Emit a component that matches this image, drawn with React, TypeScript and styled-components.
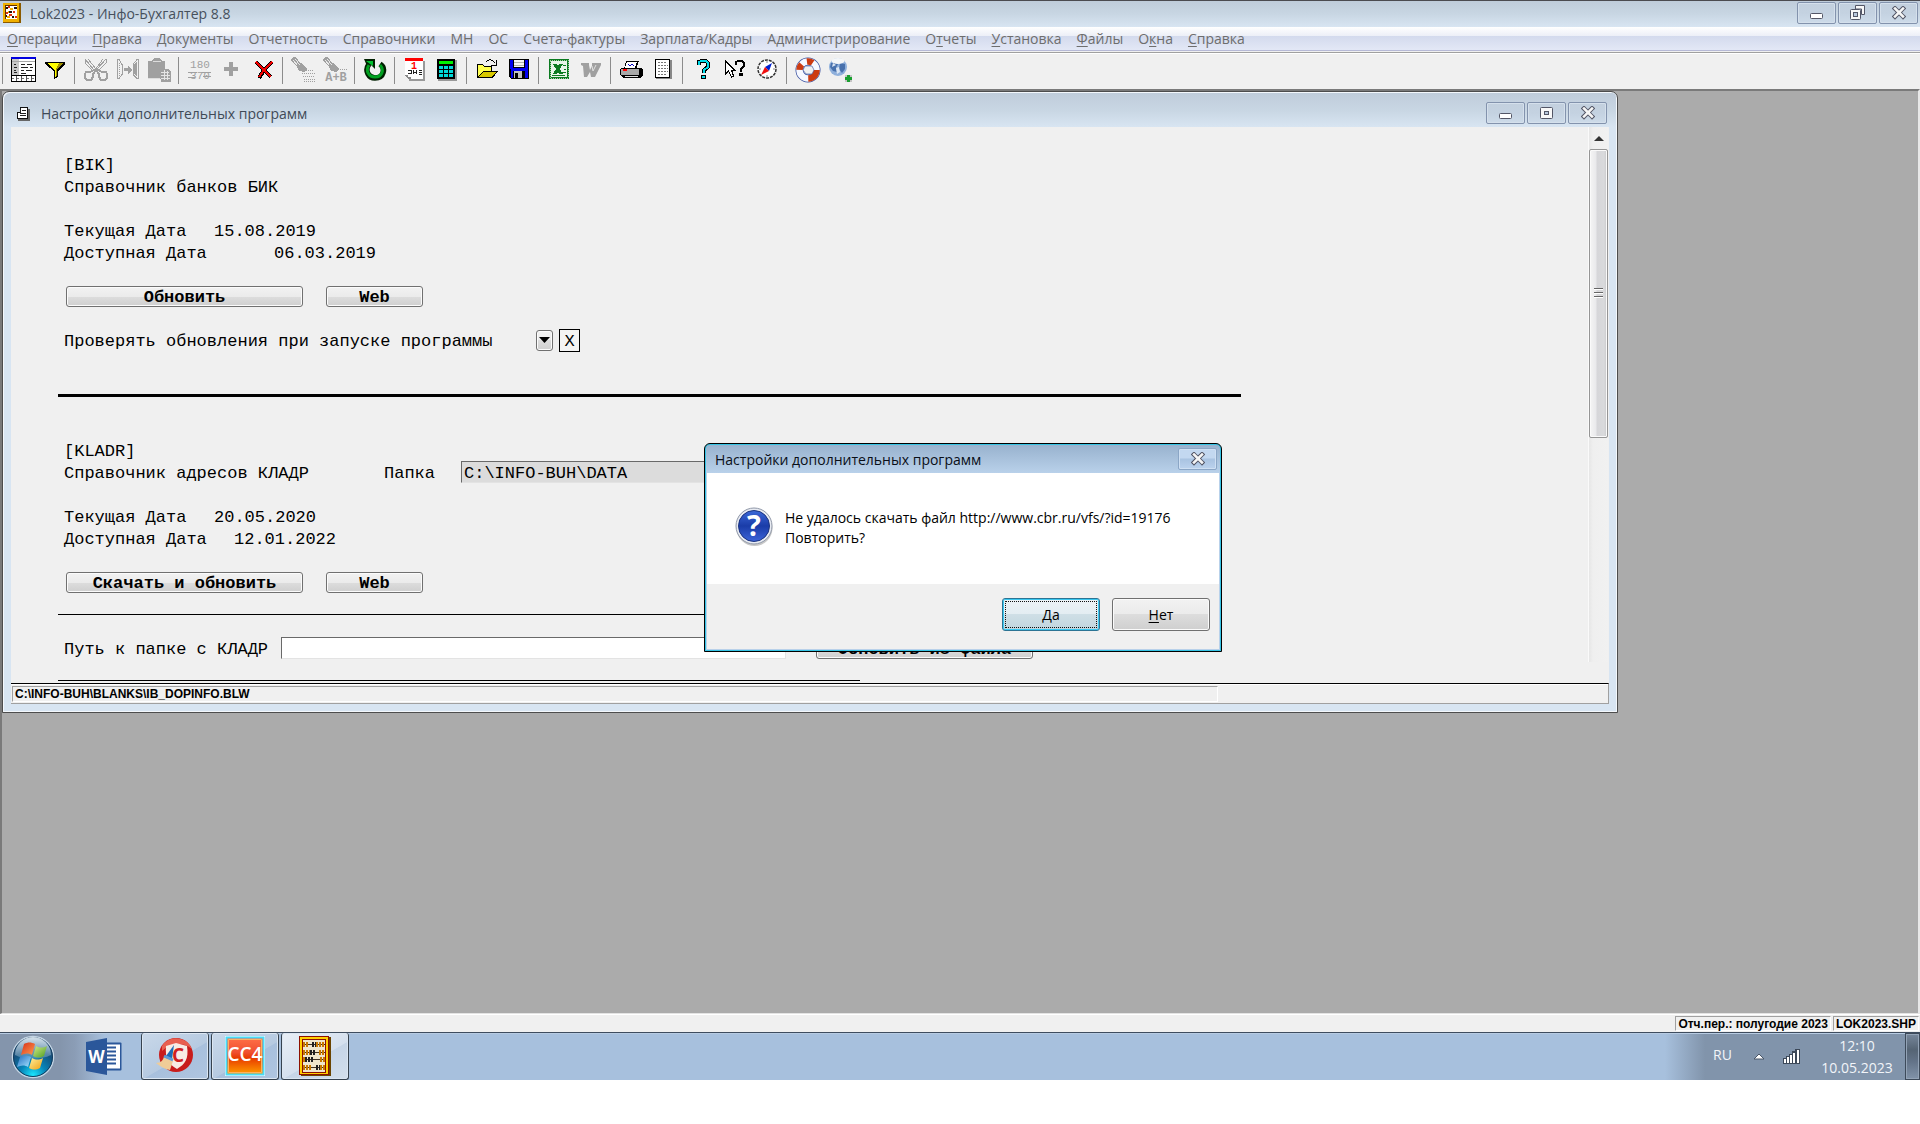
import React from "react";
import styled, { createGlobalStyle, css } from "styled-components";

const UI = `"Open Sans", "Noto Sans", sans-serif`;
const MONO = `"Liberation Mono", monospace`;

const GlobalStyle = createGlobalStyle`
  * { box-sizing: border-box; }
  body { margin: 0; background: #fff; font-family: ${UI}; font-size: 14px; }
  button, input { font: inherit; color: inherit; margin: 0; border-radius: 0; }
`;

/* ---------- application frame ---------- */

const Screen = styled.div`
  display: flex;
  flex-direction: column;
  min-height: calc(100vh - 44px);
`;

const TitleBar = styled.header`
  display: flex;
  align-items: flex-start;
  justify-content: space-between;
  height: 27px;
  padding: 1px 2px 0 3px;
  border-top: 1px solid #4b4b50;
  background: linear-gradient(#bfccda, #c8d6e3 50%, #d8e5f2);
`;

const TitleText = styled.h1`
  display: flex;
  align-items: center;
  gap: 9px;
  height: 22px;
  margin: 0;
  font-size: 14px;
  font-weight: 400;
  color: #46505c;
`;

const WindowControls = styled.div`
  display: flex;
  gap: 2px;
`;

const ControlButton = styled.button<{ $light?: boolean }>`
  display: flex;
  align-items: center;
  justify-content: center;
  width: 39px;
  height: 22px;
  padding: 0;
  border: 1px solid ${(p) => (p.$light ? "#8ba6c6" : "#8393ad")};
  border-radius: 2px;
  box-shadow: inset 0 0 0 1px ${(p) => (p.$light ? "#cfe0f3" : "#d5e0ec")};
  background: ${(p) =>
    p.$light
      ? "linear-gradient(#c3d8f0 0 45%, #a9c3e1 50%, #bcd3ee)"
      : "linear-gradient(#c3d0de, #c4d2e1 50%, #cddbe9)"};
`;

const MenuBar = styled.nav`
  display: flex;
  align-items: center;
  gap: 15px;
  height: 26px;
  padding: 0 7px 2px;
  background: linear-gradient(#fff 0, #eceff7 9px, #d3daed 9px, #e3e8f6 23px, #b6b9d6 23px, #b6b9d6 24px, #f0f0f0 24px, #f0f0f0 25px, #a0a0a0 25px);
`;

const MenuItem = styled.button`
  padding: 0;
  border: 0;
  background: none;
  line-height: 24px;
  color: #6d6d6d;
  white-space: nowrap;
  u { text-underline-offset: 2px; }
`;

const ToolBar = styled.div`
  display: flex;
  align-items: center;
  height: 36px;
  padding-bottom: 3px;
  border-top: 1px solid #fff;
  background: #f0f0f0;
`;

const Separator = styled.span`
  flex: none;
  width: 8px;
  height: 27px;
  padding-left: 2px;
  &::before {
    content: "";
    display: block;
    width: 1px;
    height: 100%;
    background: #8c8c8c;
  }
`;

const ToolButton = styled.button`
  display: flex;
  align-items: center;
  justify-content: center;
  width: 32px;
  height: 32px;
  padding: 0;
  border: 0;
  background: none;
  svg { display: block; }
`;

const Desktop = styled.main`
  position: relative;
  flex: 1;
  min-height: 640px;
  border-style: solid;
  border-width: 2px 2px 1px 2px;
  border-color: #7a7a7a #e8e8e8 #e3e3e3 #7a7a7a;
  background: #ababab;
`;

const StatusBar = styled.footer`
  display: flex;
  justify-content: flex-end;
  gap: 2px;
  height: 18px;
  padding: 1px 1px 1px 0;
  border-top: 1px solid #fff;
  background: #f0f0f0;
`;

const StatusCell = styled.span`
  padding: 0 2px;
  border: 1px solid;
  border-color: #a0a0a0 #fff #fff #a0a0a0;
  font: 700 12px/14px "Liberation Sans", sans-serif;
  white-space: nowrap;
  color: #000;
`;

/* ---------- child window ---------- */

const ChildWindow = styled.section`
  width: 1616px;
  max-width: 100%;
  padding: 0 8px 8px;
  border: 1px solid #4d4d4d;
  border-radius: 7px 7px 0 0;
  box-shadow: inset 1px 1px 0 #f4f8fc, inset -1px -1px 0 #f4f8fc;
  background: linear-gradient(#bfccda, #c8d6e3 18px, #d8e5f2 35px);
`;

const ChildTitle = styled.header`
  display: flex;
  align-items: flex-start;
  justify-content: space-between;
  height: 35px;
  padding: 10px 2px 0 5px;
`;

const ChildCaption = styled.h2`
  display: flex;
  align-items: center;
  gap: 11px;
  height: 23px;
  margin: 0;
  font-size: 14px;
  font-weight: 400;
  color: #3f4a57;
`;

const ChildBody = styled.div`
  display: flex;
  justify-content: space-between;
  height: 556px;
  padding-right: 1px;
  overflow: hidden;
  background: #f0f0f0;
`;

const Form = styled.form`
  display: flex;
  flex-direction: column;
  flex: 1;
  padding: 26px 0 0 53px;
  font-family: ${MONO};
  font-size: 17px;
  line-height: 18px;
  color: #000;
`;

const Row = styled.div`
  display: flex;
  align-items: center;
  flex: none;
  height: 22px;
  white-space: pre;
`;

const Gap = styled.div<{ $rows?: number }>`
  flex: none;
  height: ${(p) => (p.$rows ?? 1) * 22}px;
`;

const Cell = styled.span<{ $w?: number }>`
  flex: none;
  width: ${(p) => (p.$w ? `${p.$w}px` : "auto")};
  padding-top: 4px;
`;

const FieldLabel = styled.label<{ $w: number }>`
  flex: none;
  width: ${(p) => p.$w}px;
  padding-top: 4px;
`;

const Rule = styled.hr<{ $w: number; $thick?: boolean }>`
  flex: none;
  width: ${(p) => p.$w}px;
  height: ${(p) => (p.$thick ? 3 : 1)}px;
  margin: -1px 0 ${(p) => (p.$thick ? -2 : 0)}px -6px;
  border: 0;
  background: #000;
`;

const raised = css`
  border: 1px solid #707070;
  border-radius: 3px;
  box-shadow: inset 0 0 0 1px #fbfbfb;
  background: linear-gradient(#f2f2f2, #ebebeb 50%, #dddddd 50%, #cfcfcf);
`;

const ButtonRow = styled(Row)`
  gap: 23px;
  padding-left: 2px;
`;

const FormButton = styled.button<{ $w: number }>`
  ${raised}
  width: ${(p) => p.$w}px;
  height: 21px;
  padding: 3px 0 0;
  font-weight: 700;
  line-height: 16px;
`;

const DropButton = styled.button`
  ${raised}
  display: flex;
  align-items: center;
  justify-content: center;
  width: 17px;
  height: 21px;
  margin-right: 6px;
  padding: 0;
`;

const FlagInput = styled.input`
  width: 21px;
  height: 23px;
  padding: 2px 0 0;
  border: 1px solid #000;
  background: #f4f4f4;
  text-align: center;
`;

const PathInput = styled.input<{ $off?: boolean }>`
  width: 505px;
  height: 22px;
  padding: 2px 0 0 2px;
  border: 1px solid;
  border-color: #696969 #e3e3e3 #e3e3e3 #696969;
  outline: 0;
  background: ${(p) => (p.$off ? "#dcdcdc" : "#fff")};
`;

const ScrollTrack = styled.div`
  display: flex;
  flex-direction: column;
  align-items: center;
  width: 20px;
  height: 535px;
  border-left: 1px solid #fafafa;
  background: linear-gradient(90deg, #e6e6e6, #efefef 4px, #f1f1f1);
`;

const ScrollArrow = styled.div`
  display: flex;
  align-items: center;
  height: 22px;
`;

const ScrollThumb = styled.div`
  display: flex;
  align-items: center;
  justify-content: center;
  width: 19px;
  height: 289px;
  border: 1px solid #959595;
  border-radius: 2px;
  box-shadow: inset 0 0 0 1px #fafafa;
  background: linear-gradient(90deg, #f5f5f5, #e9e9eb 6px, #d6d6d9 7px, #d9dadc 14px, #c8c8ca);
`;

const ChildStatus = styled.div`
  display: flex;
  height: 21px;
  padding: 2px 0 1px;
  border-top: 1px solid #000;
  border-right: 1px solid #a0a0a0;
  border-bottom: 1px solid #a0a0a0;
  box-shadow: inset 0 1px 0 #fff;
  background: #f0f0f0;
`;

const ChildStatusCell = styled(StatusCell)`
  flex: 0 1 1206px;
  margin-left: 1px;
`;

/* ---------- message box ---------- */

const Dialog = styled.div`
  position: absolute;
  top: 352px;
  left: 702px;
  width: 518px;
  border: 1px solid #000;
  border-radius: 6px 6px 0 0;
  padding: 1px;
  background: #35c3e4;
  overflow: hidden;
`;

const DialogFrame = styled.div`
  padding: 0 1px 1px;
  border-radius: 4px 4px 0 0;
  overflow: hidden;
  background: linear-gradient(#98b2ce, #b9d1ea 28px);
`;

const DialogTitle = styled.header`
  display: flex;
  align-items: flex-start;
  justify-content: space-between;
  height: 28px;
  padding: 3px 2px 0 8px;
`;

const DialogCaption = styled.h2`
  margin: 0;
  font-size: 14px;
  font-weight: 400;
  line-height: 23px;
  color: #0a0f18;
`;

const DialogBody = styled.div`
  display: flex;
  gap: 12px;
  padding: 34px 28px 36px 28px;
  background: #fff;
  svg { flex: none; }
`;

const DialogText = styled.p`
  margin: 0;
  padding-top: 1px;
  line-height: 20px;
  color: #000;
  white-space: nowrap;
`;

const DialogFooter = styled.div`
  display: flex;
  justify-content: flex-end;
  gap: 12px;
  padding: 14px 9px 18px;
  background: #f0f0f0;
`;

const DialogButton = styled.button<{ $primary?: boolean }>`
  ${raised}
  width: 98px;
  height: 33px;
  padding: 0;
  color: #000;
  u { text-underline-offset: 2px; }
  ${(p) =>
    p.$primary &&
    css`
      border-color: #2c7494;
      box-shadow: inset 0 0 0 1px #3bc8f0;
      background: linear-gradient(#edf3f6, #e3edf2 50%, #cfdfe6 50%, #c0d5de);
      outline: 1px dotted #111;
      outline-offset: -4px;
    `}
`;

/* ---------- taskbar ---------- */

const TaskBar = styled.footer`
  display: flex;
  justify-content: space-between;
  height: 48px;
  border-top: 1px solid #3e4c5e;
  box-shadow: inset 0 1px 0 #b7cbe2;
  background: linear-gradient(90deg, #8495ac 0 60px, #8b9db6 75px, #a7c0dd 105px, #a7c0dd calc(100% - 255px), #8194ab calc(100% - 215px));
`;

const TaskGroup = styled.div`
  display: flex;
  align-items: stretch;
  gap: 2px;
`;

const StartButton = styled.button`
  width: 67px;
  padding: 0 0 0 11px;
  border: 0;
  background: none;
  svg { display: block; }
`;

const TaskButton = styled.button<{ $open?: boolean; $active?: boolean }>`
  display: flex;
  align-items: center;
  justify-content: center;
  width: ${(p) => (p.$open ? 68 : 70)}px;
  padding: 0;
  border: 1px solid ${(p) => (p.$open ? "#36424f" : "transparent")};
  border-top: 0;
  border-radius: 3px;
  box-shadow: ${(p) => (p.$open ? "inset 0 0 0 1px #dbe6f2" : "none")};
  background: ${(p) =>
    p.$active
      ? "linear-gradient(150deg, #e9eff6, #d5e0ee 55%, #c6d5e7 56%, #d3dfec)"
      : p.$open
        ? "linear-gradient(150deg, #c9d8e9, #b6cae1 55%, #a8c0dd 56%, #afc5e0)"
        : "none"};
`;

const Tray = styled.div`
  display: flex;
  align-items: center;
  color: #f2f5f9;
`;

const Lang = styled.span`
  width: 40px;
  padding-bottom: 4px;
`;

const TrayIcon = styled.span<{ $w: number }>`
  display: flex;
  width: ${(p) => p.$w}px;
`;

const Clock = styled.time`
  width: 96px;
  line-height: 22px;
  text-align: center;
`;

const ShowDesktop = styled.button`
  align-self: stretch;
  width: 15px;
  padding: 0;
  border: 1px solid #3d4a5a;
  box-shadow: inset 0 0 0 1px #93a3b6;
  background: linear-gradient(#77879b, #556474 35%, #627287 60%, #8193a9);
`;

/* ---------- icons ---------- */

const Icon = ({ children, smooth }: { children: React.ReactNode; smooth?: boolean }) => (
  <svg width="26" height="26" viewBox="0 0 26 26" shapeRendering={smooth ? "auto" : "crispEdges"} aria-hidden="true">
    {children}
  </svg>
);

const G = "#a0a0a0";

const GridIcon = () => (
  <Icon>
    <rect width="25" height="25" fill="#000" />
    <rect x="1" y="2" width="23" height="16" fill="#fff" />
    <rect width="25" height="2" fill="#0000e0" />
    <rect x="1" y="2" width="7" height="16" fill="#c8c8c8" />
    <path d="M1 4.500h23" stroke="#a8a8a8" />
    <path d="M3 7.500h2M3 10.500h3M3 13.500h2M3 15.500h3M10 7.500h4M16 7.500h5M10 10.500h7M19 10.500h3M10 13.500h3M15 13.500h6M10 16.500h5" stroke="#222" />
    <path d="M1 19h23v5H1z" fill="#fff" />
    <path d="M5.500 19v5M10.500 19v5M15.500 19v5M20.500 19v5" stroke="#555" />
    <path d="M1 21.500h23" stroke="#777" strokeDasharray="2 3" />
  </Icon>
);
const FunnelIcon = () => (
  <Icon>
    <path d="M2 5h20v2l-7 7v6l-4 2v-8L2 7z" fill="#000" />
    <path d="M4 6h12l-2 6-1 8h-1v-7z" fill="#ffff00" />
    <path d="M16 6h4l-6 7v6h-1v-7z" fill="#a09000" />
  </Icon>
);
const CutIcon = () => (
  <Icon>
    <path d="M2 2l9 11M5 2l8 10M23 2l-9 10M20 2l-8 11M2 2v4l8 8M23 2v4l-8 8" stroke={G} strokeWidth="1" fill="none" />
    <path d="M11 13l-4 2H3l-1 2v4l2 2h4l2-3v-3l3-4 3 4v3l2 3h4l2-2v-4l-1-2h-4l-4-2z" fill="none" stroke={G} strokeWidth="2" />
  </Icon>
);
const InsertIcon = () => (
  <Icon>
    <path d="M2.500 2v20M2 2.500h2l3 5v10l-3 4H2M23.500 2v20M24 2.500h-2l-4 5v10l4 4h2" stroke={G} fill="none" />
    <path d="M4.500 6v14" stroke={G} strokeDasharray="1 1" />
    <path d="M9 11h4V8l4 5-4 4v-3H9z" fill={G} />
    <path d="M19 7l3-2v15l-3-3z" fill={G} />
  </Icon>
);
const PasteIcon = () => (
  <Icon>
    <path d="M1 4h4V3l3-2h4l3 2v1h3v8h-4v10H1z" fill={G} />
    <path d="M6 4.500h8M1 21.500h12" stroke="#ddd" />
    <path d="M14 12h7l3 3v10H14z" fill={G} />
    <path d="M14 15.500h8M14 18.500h9M14 21.500h9M17.500 13v10M20.500 14v9" stroke="#e4e4e4" />
  </Icon>
);
const NumberIcon = () => (
  <Icon>
    <text x="13" y="11" textAnchor="middle" fontFamily="Liberation Mono, monospace" fontSize="11" fill={G}>180</text>
    <text x="13" y="22" textAnchor="middle" fontFamily="Liberation Mono, monospace" fontSize="11" fill={G}>370</text>
    <path d="M1 15.500h9M1 20.500h7M15 15.500h9M16 19.500h8" stroke={G} />
  </Icon>
);
const PlusIcon = () => (
  <Icon><path d="M10 5h4v5h5v4h-5v5h-4v-5H5v-4h5z" fill={G} /></Icon>
);
const DeleteIcon = () => (
  <Icon>
    <path d="M5 5l6 6 3 3 6 6M21 5l-8 8-5 8" stroke="#000" strokeWidth="4" fill="none" />
    <path d="M5 5l6 6 3 3 6 6M21 5l-8 8-5 7" stroke="#f00000" strokeWidth="2" fill="none" />
  </Icon>
);
const Torch = () => (
  <>
    <path d="M0 2l3-2h2l4 6 3 1 4 5-3 3-5-1-2-4-6-6z" fill={G} />
    <path d="M2.500 3.500l4 5M4.500 2l4 6" stroke="#e8e8e8" />
  </>
);
const TorchIcon = () => (
  <Icon>
    <Torch />
    <path d="M13 13.500h10M11 16.500h13M12 19.500h12M13 22.500h11M13 24.500h11" stroke={G} strokeDasharray="1 1" />
  </Icon>
);
const TorchReplaceIcon = () => (
  <Icon>
    <Torch />
    <text x="13" y="24" textAnchor="middle" fontFamily="Liberation Mono, monospace" fontWeight="700" fontSize="12" fill={G}>A+B</text>
    <path d="M17 12.500h7" stroke={G} strokeDasharray="1 1" />
  </Icon>
);
const RefreshIcon = () => (
  <Icon smooth>
    <path d="M6 7c-5 7 0 14 6 14 9 0 11-10 5-14" fill="none" stroke="#002000" strokeWidth="5.500" />
    <path d="M1 2h11v10l-4-4-4 1z" fill="#002000" />
    <path d="M6 8c-4 6 0 12 6 12 8 0 9-8 5-12" fill="none" stroke="#00a020" strokeWidth="3" />
    <path d="M3 4h7v5L7 7z" fill="#00c030" />
  </Icon>
);
const CalendarIcon = () => (
  <Icon>
    <path d="M4 4h18v20H6z" fill="#999" />
    <path d="M2 1h18v21H6l-4-4z" fill="#fff" />
    <rect x="2" y="1" width="18" height="3" fill="#f00" />
    <text x="11" y="12" textAnchor="middle" fontFamily="Liberation Mono, monospace" fontWeight="700" fontSize="10" fill="#f00">1</text>
    <path d="M5 13.500h3v3H5M10.500 13v4M13.500 13v4M10 15.500h4M16 13.500h3M16 15.500h3M16 17h3" stroke="#222" fill="none" />
    <path d="M2 18h3v2h3v2H5z" fill="#888" />
  </Icon>
);
const CalcIcon = () => (
  <Icon>
    <rect x="3" y="3" width="19" height="21" fill="#999" />
    <rect x="2" y="2" width="18" height="20" fill="#000" />
    <rect x="4" y="4" width="14" height="3" fill="#00f000" />
    <path d="M4 10.500h14M4 14.500h14M4 18.500h14" stroke="#00d8d8" strokeWidth="3" strokeDasharray="4 1" />
  </Icon>
);
const OpenIcon = () => (
  <Icon>
    <path d="M2 7h5l2 2h8v5h6l-5 7H2z" fill="#000" />
    <path d="M3 8h4l2 2h7v4H8l-5 6z" fill="#ffff50" />
    <path d="M8 15h13l-4 5H4z" fill="#d8c800" />
    <path d="M11 5c3-4 7-2 9 1M21 3v5h-5" fill="none" stroke="#000" strokeWidth="1" />
  </Icon>
);
const SaveIcon = () => (
  <Icon>
    <path d="M2 2h20v20H4l-2-2z" fill="#000" />
    <path d="M3 3h3v8h12V3h3v18H4z" fill="#0000f0" />
    <rect x="7" y="3" width="10" height="7" fill="#f4f4f4" />
    <path d="M7 5.500h10M7 8.500h10" stroke="#b0b0b0" />
    <rect x="6" y="14" width="12" height="7" fill="#000" />
    <rect x="7" y="14" width="8" height="7" fill="#c0c0c0" />
    <rect x="8" y="16" width="3" height="5" fill="#000" />
  </Icon>
);
const ExcelIcon = () => (
  <Icon>
    <rect x="2" y="2" width="20" height="20" fill="#0b7a20" />
    <rect x="4" y="4" width="16" height="16" fill="#e8f4e8" />
    <rect x="3" y="3" width="18" height="18" fill="none" stroke="#9fcf9f" strokeDasharray="1 1" />
    <path d="M6 7h4l6 10h-4zM12 7h4L10 17H6z" fill="#0b7a20" />
    <path d="M16 8.500h3M17 12.500h2M15 15.500h4M5 18.500h13" stroke="#0b7a20" />
  </Icon>
);
const WordGreyIcon = () => (
  <Icon smooth>
    <path d="M2 6h8v2l1 5 2-4V6h9v2l-6 12h-4l-1-5-3 5H5L4 9 2 8z" fill={G} />
    <path d="M13 9l1 5 3-6" stroke="#e0e0e0" fill="none" />
  </Icon>
);
const PrintIcon = () => (
  <Icon>
    <path d="M7 4h13l-3 8H5z" fill="#000" />
    <path d="M8 5h10l-2 6H6z" fill="#fff" />
    <path d="M9 7l2 2 2-2 2 2" stroke="#0000c0" fill="none" />
    <path d="M2 11h20l2 2v5l-3 3H4l-3-3v-5z" fill="#000" />
    <path d="M2 12h18v6H2z" fill="#a8a8a8" />
    <rect x="4" y="12" width="4" height="2" fill="#f00" />
    <path d="M6 19.500h13" stroke="#e0e0e0" />
  </Icon>
);
const PreviewIcon = () => (
  <Icon>
    <rect x="5" y="3" width="16" height="19" fill="#888" />
    <rect x="4.500" y="2.500" width="14" height="18" fill="#fff" stroke="#000" />
    <path d="M7 5.500h9M7 8.500h10M7 11.500h10M7 14.500h10M7 17.500h8" stroke="#777" strokeDasharray="2 1" />
  </Icon>
);
const HelpIcon = () => (
  <Icon>
    <path d="M8 8V5l2-1h5l2 2v4l-4 3v3" fill="none" stroke="#000" strokeWidth="4" />
    <path d="M8 8V5l2-1h5l2 2v4l-4 3v3" fill="none" stroke="#00d8e8" strokeWidth="2" />
    <rect x="10" y="18" width="5" height="4" fill="#000" />
    <rect x="11" y="19" width="3" height="2" fill="#00d8e8" />
  </Icon>
);
const WhatIcon = () => (
  <Icon>
    <path d="M2.500 4v13l3-3 3 6 2-1-2-6h3z" fill="#fff" stroke="#000" strokeWidth="1" />
    <path d="M13 8V5l2-1h4l2 2v3l-3 3v3" fill="none" stroke="#000" strokeWidth="2" />
    <rect x="16" y="16" width="4" height="3" fill="#000" />
  </Icon>
);
const CompassIcon = () => (
  <Icon smooth>
    <circle cx="12" cy="12" r="9" fill="#fff" stroke="#333" strokeWidth="1.500" strokeDasharray="3 1" />
    <path d="M12 4v2M12 18v2M4 12h2M18 12h2" stroke="#888" />
    <path d="M17 6l-3 8-4-4z" fill="#0020d0" />
    <path d="M6 18l4-8 4 4z" fill="#f01010" />
  </Icon>
);
const LifebuoyIcon = () => (
  <Icon smooth>
    <circle cx="13" cy="13" r="8.500" fill="none" stroke="#3850a0" strokeWidth="8" />
    <circle cx="13" cy="13" r="8.500" fill="none" stroke="#f6f8ff" strokeWidth="6.500" />
    <circle cx="13" cy="13" r="8.500" fill="none" stroke="#cc3a10" strokeWidth="6.500" strokeDasharray="13 13.700 6 6 6 8.700" />
    <path d="M10 9h7l2 4-2 4h-6l-3-4z" fill="#f0f0f0" stroke="#3850a0" strokeWidth=".6" />
  </Icon>
);
const GlobeIcon = () => (
  <Icon smooth>
    <circle cx="11" cy="10" r="9" fill="#8fb0dc" />
    <path d="M4 6l5-1 2 2-2 4 1 4-4-1-3-4zM13 6l5 1v5l-3 4-3-4z" fill="#3c66a4" opacity=".85" />
    <path d="M9 11l3-1 1 5-3 2zM6 6l3 2-4 2z" fill="#dbe6f4" />
    <ellipse cx="11" cy="4" rx="6.500" ry="3" fill="#f4f6f8" />
    <path d="M18 18h7v7h-7z" fill="#c4c4c4" />
    <path d="M21.500 18v7M18 21.500h7" stroke="#1aa030" strokeWidth="3" />
  </Icon>
);

const MinGlyph = () => (
  <svg width="14" height="18" viewBox="0 0 14 18" aria-hidden="true">
    <rect x=".5" y="9.500" width="12" height="5" rx="1" fill="#fff" stroke="#535666" />
  </svg>
);
const MaxGlyph = () => (
  <svg width="14" height="14" viewBox="0 0 14 14" aria-hidden="true">
    <rect x=".5" y="1.500" width="12" height="11" rx="1" fill="#f8f8f8" stroke="#535666" />
    <rect x="4.500" y="5.500" width="4" height="3" fill="#b8c8dc" stroke="#535666" />
  </svg>
);
const RestoreGlyph = () => (
  <svg width="16" height="16" viewBox="0 0 16 16" aria-hidden="true">
    <path d="M5.500 .5h9v9h-3V4h-6z" fill="#f8f8f8" stroke="#535666" />
    <rect x=".5" y="4.500" width="10" height="10" rx="1" fill="#f8f8f8" stroke="#535666" />
    <rect x="3.500" y="7.500" width="4" height="4" fill="#b8c8dc" stroke="#535666" />
  </svg>
);
const CloseGlyph = () => (
  <svg width="14" height="14" viewBox="0 0 14 14" aria-hidden="true">
    <path d="M3 2.500l8 8M11 2.500l-8 8" stroke="#535666" strokeWidth="4.500" strokeLinecap="square" />
    <path d="M3 2.500l8 8M11 2.500l-8 8" stroke="#f6f6f6" strokeWidth="2.500" strokeLinecap="square" />
  </svg>
);

const AbacusSmall = () => (
  <svg width="18" height="20" viewBox="0 0 18 20" shapeRendering="crispEdges" aria-hidden="true">
    <rect width="18" height="20" fill="#8a5a00" />
    <rect x="0" y="0" width="16" height="19" fill="#f0b000" />
    <rect x="2" y="2" width="12" height="14" fill="#603000" />
    <rect x="3" y="3" width="11" height="13" fill="#fff" />
    <path d="M3 5h2M11 5h3M6 9h3M3 13h1M9 14h2" stroke="#201008" strokeWidth="2" />
    <path d="M5 4h2M3 10h2M10 9h2M6 12h3M12 14h2" stroke="#e03010" strokeWidth="2" />
    <path d="M7 6h3M5 9h1M4 14h3" stroke="#f0b000" strokeWidth="2" />
  </svg>
);
const DocIcon = () => (
  <svg width="14" height="16" viewBox="0 0 14 16" shapeRendering="crispEdges" aria-hidden="true">
    <path d="M4.500 1.500h7v11h-10v-6h3z" fill="#fff" stroke="#111" />
    <path d="M6 4.500h4M4 7.500h6M4 9.500h6M4.500 2v5" stroke="#222" />
    <path d="M2 14h12M13 3v12" stroke="#666" strokeWidth="2" />
  </svg>
);

const StartOrb = () => (
  <svg width="44" height="44" viewBox="0 0 44 44" aria-hidden="true">
    <defs>
      <radialGradient id="orb" cx=".5" cy=".95" r=".9">
        <stop offset="0" stopColor="#1ce8ff" />
        <stop offset=".35" stopColor="#0784b8" />
        <stop offset=".7" stopColor="#14507c" />
        <stop offset="1" stopColor="#4f7898" />
      </radialGradient>
      <linearGradient id="shine" x2="0" y2="1">
        <stop offset="0" stopColor="#e6eff6" stopOpacity=".9" />
        <stop offset="1" stopColor="#b4cde0" stopOpacity=".3" />
      </linearGradient>
      <linearGradient id="red" x2="1" y2="1"><stop stopColor="#d83018" /><stop offset="1" stopColor="#ff9c50" /></linearGradient>
      <linearGradient id="green" x2="1" y2="1"><stop stopColor="#d4ec88" /><stop offset="1" stopColor="#4c9c20" /></linearGradient>
      <linearGradient id="blue" x2="1" y2="1"><stop stopColor="#1e6cc0" /><stop offset="1" stopColor="#a8e4ff" /></linearGradient>
      <linearGradient id="gold" x2="1" y2="1"><stop stopColor="#fff0a0" /><stop offset="1" stopColor="#f0a010" /></linearGradient>
    </defs>
    <circle cx="22" cy="22" r="20.500" fill="url(#orb)" stroke="#c4d5e4" strokeWidth="1.500" />
    <circle cx="22" cy="22" r="19.500" fill="none" stroke="#123a5c" />
    <path d="M4 20a18 18 0 0 1 36 0c-10 5-26 5-36 0z" fill="url(#shine)" />
    <path d="M13 9c4-2 7-2 11 0l-3 11c-3-2-7-2-11 0z" fill="url(#red)" />
    <path d="M25 11c4 2 7 2 11 0l-3 10c-4 2-7 2-11 0z" fill="url(#green)" />
    <path d="M9 22c4-2 7-2 11 0l-3 10c-3-2-7-2-11 0z" fill="url(#blue)" />
    <path d="M21 23c4 2 7 2 11 0l-3 10c-4 2-7 2-11 0z" fill="url(#gold)" />
  </svg>
);
const WordIcon = () => (
  <svg width="36" height="37" viewBox="0 0 36 37" aria-hidden="true">
    <rect x="19" y="4.500" width="16.500" height="28" rx="1" fill="#2b579a" />
    <rect x="20" y="6.500" width="14" height="24" fill="#fff" />
    <path d="M21 9.500h9M21 13.500h9M21 17.500h9M21 21.500h9M21 25.500h9" stroke="#2b579a" strokeWidth="2" />
    <path d="M0 4l21-4v37L0 33z" fill="#2b579a" />
    <text x="10.500" y="25" textAnchor="middle" fontFamily="Open Sans, sans-serif" fontWeight="700" fontSize="17" fill="#fff">W</text>
  </svg>
);
const CleanerIcon = () => (
  <svg width="40" height="38" viewBox="0 0 40 38" aria-hidden="true">
    <circle cx="21" cy="18" r="17" fill="#c81c1c" />
    <path d="M7 9A17 17 0 0 1 37 12 22 22 0 0 0 7 14z" fill="#e86050" />
    <path d="M11 9l10-3 11 3c2 13-2 18-10 23C13 27 10 21 11 9z" fill="#f8ece4" />
    <text x="23" y="25" textAnchor="middle" fontFamily="Open Sans, sans-serif" fontWeight="700" fontSize="19" fill="#d02020">C</text>
    <path d="M19 8l-8 11 6 3z" fill="#1e6cb8" />
    <path d="M9 20l9 4-3 9c-6-1-10-4-14-7 5 0 7-3 8-6z" fill="#f0cc98" />
    <path d="M9 19l9 4" stroke="#5c9cd8" strokeWidth="3" />
  </svg>
);
const Cc4Icon = () => (
  <svg width="40" height="40" viewBox="0 0 40 40" aria-hidden="true">
    <defs>
      <linearGradient id="cc" x2="0" y2="1">
        <stop stopColor="#ff7048" /><stop offset=".4" stopColor="#f05030" />
        <stop offset=".55" stopColor="#e83a00" /><stop offset="1" stopColor="#ffa000" />
      </linearGradient>
    </defs>
    <rect width="40" height="40" fill="#fff" />
    <rect x="1.500" y="1.500" width="37" height="37" fill="url(#cc)" stroke="#48dcf8" strokeWidth="2" />
    <path d="M3.500 3.500h33v33h-33z" fill="none" stroke="#ffb060" />
    <text x="20" y="25" textAnchor="middle" fontFamily="Open Sans, sans-serif" fontWeight="600" fontSize="19" fill="#fff">CC4</text>
  </svg>
);
const AbacusIcon = () => (
  <svg width="32" height="40" viewBox="0 0 32 40" shapeRendering="crispEdges" aria-hidden="true">
    <path d="M2 1h30v39H2z" fill="#6a4400" />
    <rect x="0" y="0" width="30" height="39" fill="#8c1000" />
    <rect x="1" y="1" width="28" height="37" fill="#ffd000" />
    <rect x="3" y="3" width="24" height="34" fill="#8c1000" />
    <rect x="4" y="4" width="22" height="32" fill="#f0e6cc" />
    <path d="M4 8.500h22M4 16.500h22M4 23.500h22M4 31.500h22" stroke="#403020" />
    <path d="M4 8.500h5M17 8.500h9M4 16.500h7M20 16.500h6M4 23.500h2M21 23.500h5M4 31.500h8M21 31.500h5" stroke="#c87800" strokeWidth="5" strokeDasharray="2 1" />
    <path d="M13 8.500h4M11 16.500h5M6 23.500h8M17 31.500h4" stroke="#202020" strokeWidth="5" strokeDasharray="2 1" />
  </svg>
);
const QuestionIcon = () => (
  <svg width="38" height="40" viewBox="0 0 38 40" aria-hidden="true">
    <defs>
      <linearGradient id="q" x2="0" y2="1">
        <stop stopColor="#3c68d8" /><stop offset=".5" stopColor="#1a3ca8" /><stop offset="1" stopColor="#3c64d8" />
      </linearGradient>
    </defs>
    <ellipse cx="19.500" cy="21" rx="18" ry="18" fill="#c8c8c8" />
    <circle cx="19" cy="19" r="18" fill="#e8ebf2" stroke="#9098a8" />
    <circle cx="19" cy="19" r="15.500" fill="url(#q)" stroke="#1c3480" />
    <text x="19" y="29" textAnchor="middle" fontFamily="Open Sans, sans-serif" fontWeight="700" fontSize="29" fill="#fff">?</text>
  </svg>
);

/* ---------- data ---------- */

/* "_" marks the access key of a menu entry */
const MENU = [
  "_Операции", "_Правка", "_Документы", "Отчетность", "Справочники", "МН", "ОС",
  "Счета-фактуры", "Зарплата/Кадры", "Администрирование", "О_тчеты", "_Установка",
  "_Файлы", "О_кна", "_Справка",
];

const TOOLS: [string, React.ComponentType][][] = [
  [["Таблица", GridIcon], ["Фильтр", FunnelIcon]],
  [["Вырезать", CutIcon], ["Вставка", InsertIcon], ["Вставить", PasteIcon]],
  [["Нумерация", NumberIcon], ["Добавить", PlusIcon], ["Удалить", DeleteIcon]],
  [["Найти", TorchIcon], ["Заменить", TorchReplaceIcon]],
  [["Обновить", RefreshIcon]],
  [["Календарь", CalendarIcon], ["Калькулятор", CalcIcon]],
  [["Открыть", OpenIcon], ["Сохранить", SaveIcon]],
  [["Excel", ExcelIcon], ["Word", WordGreyIcon]],
  [["Печать", PrintIcon], ["Просмотр", PreviewIcon]],
  [["Справка", HelpIcon], ["Что это", WhatIcon], ["Навигатор", CompassIcon]],
  [["Поддержка", LifebuoyIcon], ["Интернет", GlobeIcon]],
];

const AccessLabel = ({ text }: { text: string }) => {
  const at = text.indexOf("_");
  if (at < 0) return <>{text}</>;
  return <>{text.slice(0, at)}<u>{text[at + 1]}</u>{text.slice(at + 2)}</>;
};

const Controls = ({ restore }: { restore?: boolean }) => (
  <WindowControls>
    <ControlButton aria-label="Свернуть"><MinGlyph /></ControlButton>
    <ControlButton aria-label="Развернуть">{restore ? <RestoreGlyph /> : <MaxGlyph />}</ControlButton>
    <ControlButton aria-label="Закрыть"><CloseGlyph /></ControlButton>
  </WindowControls>
);

export default function App() {
  return (
    <>
      <GlobalStyle />
      <Screen>
        <TitleBar>
          <TitleText><AbacusSmall />Lok2023 - Инфо-Бухгалтер 8.8</TitleText>
          <Controls restore />
        </TitleBar>
        <MenuBar>
          {MENU.map((m) => <MenuItem key={m}><AccessLabel text={m} /></MenuItem>)}
        </MenuBar>
        <ToolBar role="toolbar">
          {TOOLS.map((group, i) => (
            <React.Fragment key={i}>
              <Separator />
              {group.map(([name, Glyph]) => (
                <ToolButton key={name} aria-label={name}><Glyph /></ToolButton>
              ))}
            </React.Fragment>
          ))}
        </ToolBar>

        <Desktop>
          <ChildWindow>
            <ChildTitle>
              <ChildCaption><DocIcon />Настройки дополнительных программ</ChildCaption>
              <Controls />
            </ChildTitle>
            <ChildBody>
              <Form onSubmit={(e) => e.preventDefault()}>
                <Row><Cell>[BIK]</Cell></Row>
                <Row><Cell>Справочник банков БИК</Cell></Row>
                <Gap />
                <Row><Cell $w={150}>Текущая Дата</Cell><Cell>15.08.2019</Cell></Row>
                <Row><Cell $w={210}>Доступная Дата</Cell><Cell>06.03.2019</Cell></Row>
                <Gap />
                <ButtonRow>
                  <FormButton type="button" $w={237}>Обновить</FormButton>
                  <FormButton type="button" $w={97}>Web</FormButton>
                </ButtonRow>
                <Gap />
                <Row>
                  <FieldLabel htmlFor="check" $w={472}>Проверять обновления при запуске программы</FieldLabel>
                  <DropButton type="button" aria-label="Выбрать">
                    <svg width="11" height="6" viewBox="0 0 11 6" aria-hidden="true"><path d="M0 0h11L5.500 6z" /></svg>
                  </DropButton>
                  <FlagInput id="check" defaultValue="X" />
                </Row>
                <Gap $rows={2} />
                <Rule $w={1183} $thick />
                <Gap $rows={2} />
                <Row><Cell>[KLADR]</Cell></Row>
                <Row>
                  <Cell $w={320}>Справочник адресов КЛАДР</Cell>
                  <FieldLabel htmlFor="folder" $w={77}>Папка</FieldLabel>
                  <PathInput id="folder" $off readOnly defaultValue={"C:\\INFO-BUH\\DATA"} />
                </Row>
                <Gap />
                <Row><Cell $w={150}>Текущая Дата</Cell><Cell>20.05.2020</Cell></Row>
                <Row><Cell $w={170}>Доступная Дата</Cell><Cell>12.01.2022</Cell></Row>
                <Gap />
                <ButtonRow>
                  <FormButton type="button" $w={237}>Скачать и обновить</FormButton>
                  <FormButton type="button" $w={97}>Web</FormButton>
                </ButtonRow>
                <Gap />
                <Rule $w={802} />
                <Gap />
                <Row>
                  <FieldLabel htmlFor="path" $w={217}>Путь к папке с КЛАДР</FieldLabel>
                  <PathInput id="path" />
                  <Cell $w={30} />
                  <FormButton type="button" $w={217}>Обновить из файла</FormButton>
                </Row>
                <Gap />
                <Rule $w={802} />
              </Form>
              <ScrollTrack aria-hidden="true">
                <ScrollArrow>
                  <svg width="10" height="5" viewBox="0 0 10 5"><path d="M5 0l5 5H0z" fill="#333" /></svg>
                </ScrollArrow>
                <ScrollThumb>
                  <svg width="9" height="11" viewBox="0 0 9 11" shapeRendering="crispEdges">
                    <path d="M0 .5h9M0 4.500h9M0 8.500h9" stroke="#666" />
                    <path d="M0 1.500h9M0 5.500h9M0 9.500h9" stroke="#fff" />
                  </svg>
                </ScrollThumb>
              </ScrollTrack>
            </ChildBody>
            <ChildStatus><ChildStatusCell>C:\INFO-BUH\BLANKS\IB_DOPINFO.BLW</ChildStatusCell></ChildStatus>
          </ChildWindow>

          <Dialog role="dialog" aria-labelledby="dialog-title">
            <DialogFrame>
              <DialogTitle>
                <DialogCaption id="dialog-title">Настройки дополнительных программ</DialogCaption>
                <ControlButton $light aria-label="Закрыть"><CloseGlyph /></ControlButton>
              </DialogTitle>
              <DialogBody>
                <QuestionIcon />
                <DialogText>
                  Не удалось скачать файл http://www.cbr.ru/vfs/?id=19176<br />Повторить?
                </DialogText>
              </DialogBody>
              <DialogFooter>
                <DialogButton $primary><u>Д</u>а</DialogButton>
                <DialogButton><u>Н</u>ет</DialogButton>
              </DialogFooter>
            </DialogFrame>
          </Dialog>
        </Desktop>

        <StatusBar>
          <StatusCell>Отч.пер.: полугодие 2023</StatusCell>
          <StatusCell>LOK2023.SHP</StatusCell>
        </StatusBar>
        <TaskBar>
          <TaskGroup>
            <StartButton aria-label="Пуск"><StartOrb /></StartButton>
            <TaskButton aria-label="Word"><WordIcon /></TaskButton>
            <TaskButton $open aria-label="CCleaner"><CleanerIcon /></TaskButton>
            <TaskButton $open aria-label="CC4"><Cc4Icon /></TaskButton>
            <TaskButton $open $active aria-label="Инфо-Бухгалтер"><AbacusIcon /></TaskButton>
          </TaskGroup>
          <Tray>
            <Lang>RU</Lang>
            <TrayIcon $w={30}>
              <svg width="12" height="8" viewBox="0 0 12 8" aria-hidden="true"><path d="M6 1l5 5H1z" fill="#fff" stroke="#4a5668" /></svg>
            </TrayIcon>
            <TrayIcon $w={26}>
              <svg width="17" height="16" viewBox="0 0 17 16" shapeRendering="crispEdges" aria-hidden="true">
                <path d="M0 9h3V7h3V5h3V2h3V0h5v15H0z" fill="#3c4858" />
                <path d="M2 14v-4M5 14V8M8 14V6M11 14V4M14.500 14V1" stroke="#fff" strokeWidth="2" />
              </svg>
            </TrayIcon>
            <Clock>12:10<br />10.05.2023</Clock>
            <ShowDesktop aria-label="Показать рабочий стол" />
          </Tray>
        </TaskBar>
      </Screen>
    </>
  );
}
